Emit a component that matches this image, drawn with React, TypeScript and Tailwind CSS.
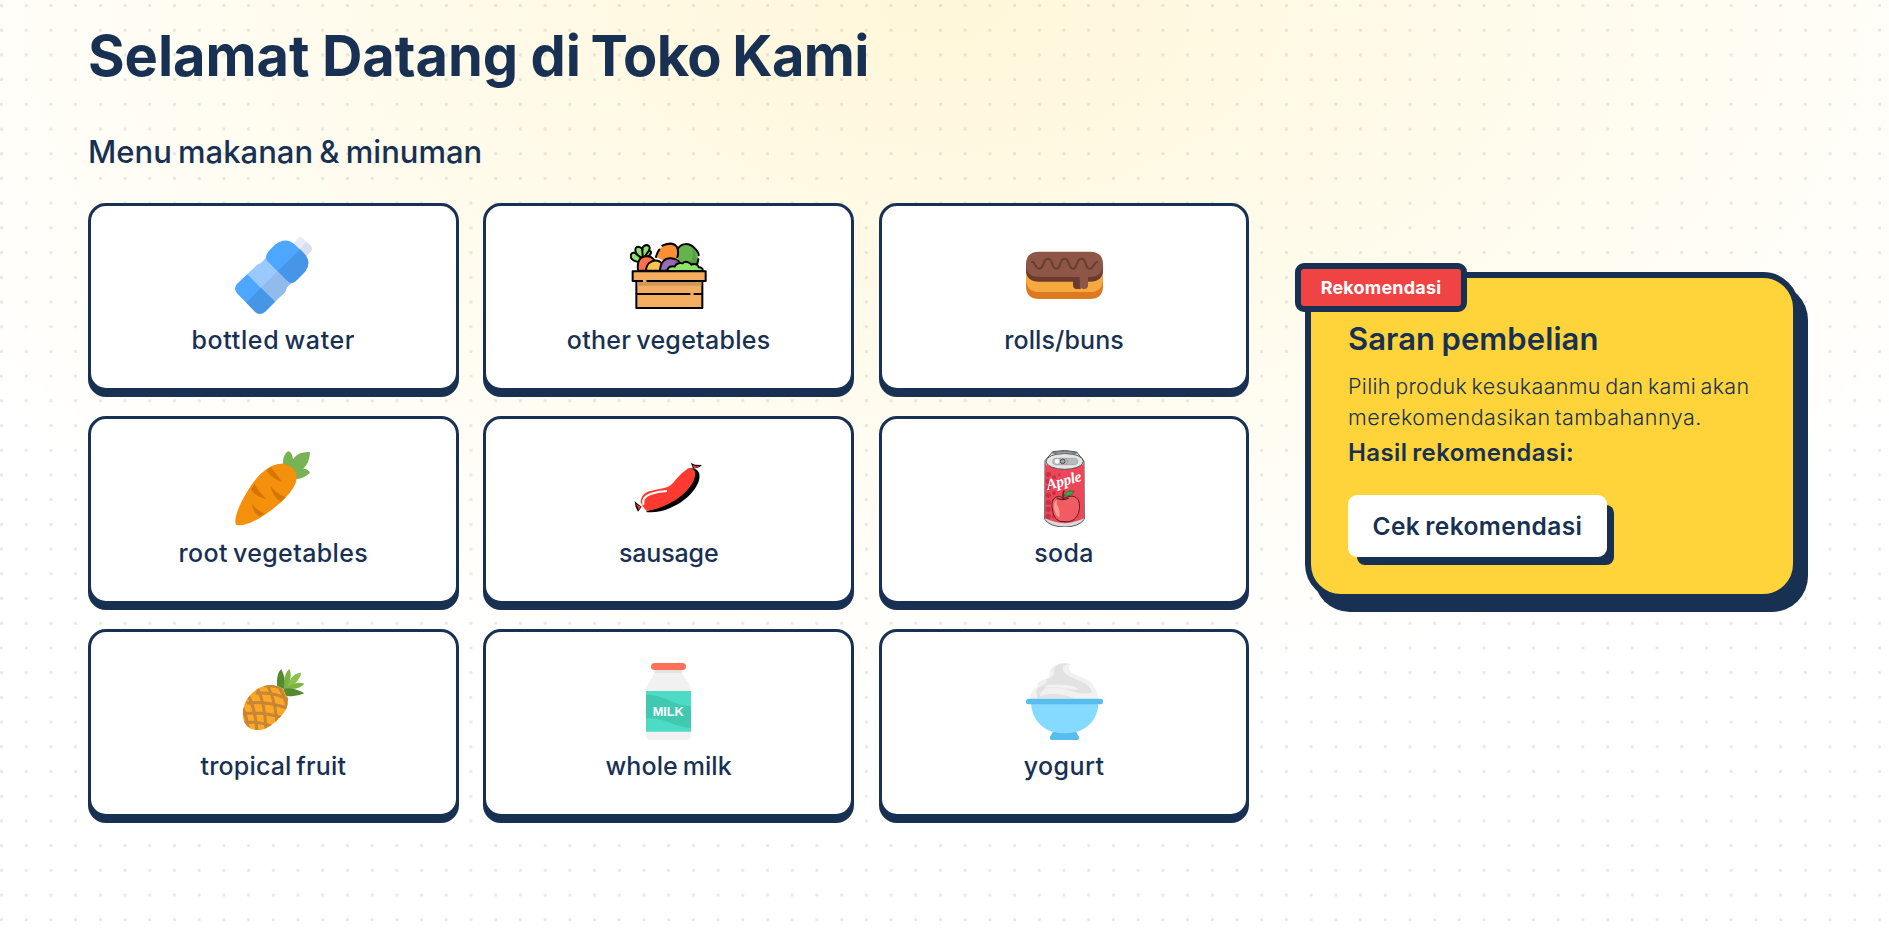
import type { ReactNode } from "react";

function BottleIcon() {
  return (
    <svg viewBox="45 36 231 231" className="size-[77px]">
      <path d="M216 60 L229 44 Q239 30 251 41 L270 60 Q281 71 272 80 L258 95 Z" fill="#e7ebff" />
      <path d="M237 76 L259 50 L270 60 Q281 71 272 80 L258 95 Z" fill="#d9dff1" />
      <path d="M112 119 Q124 117 138 97 L215 174 Q198 186 197 198 Q194 205 186 210 L165 230 L82 147 Z" fill="#9ac9ff" />
      <path d="M176 136 L215 174 Q198 186 197 198 Q194 205 186 210 L165 230 L123 188 Z" fill="#90bbeb" />
      <path d="M82 147 L165 230 L137 259 Q121 273 106 261 L53 207 Q39 193 50 178 Z" fill="#4da6ff" />
      <path d="M123 188 L165 230 L137 259 Q121 273 106 261 L79 233 Z" fill="#4795e6" />
      <path d="M146 79 L164 60 Q196 33 225 59 L251 84 Q277 112 255 140 L233 163 Q216 183 200 166 L142 108 Q133 95 146 79 Z" fill="#4da6ff" />
      <path d="M240 73 L251 84 Q277 112 255 140 L233 163 Q216 183 200 166 L174 138 Z" fill="#4795e6" />
    </svg>
  );
}

function VegetableCrateIcon() {
  return (
    <svg viewBox="46 21 231 231" className="size-[77px]" stroke="#000" strokeWidth="6" strokeLinecap="round" strokeLinejoin="round">
      <path d="M82 95 C68 98 47 92 48 77 C50 65 62 68 66 72 C57 56 65 46 77 52 Q82 54 83 60 C83 47 94 42 103 48 Q107 53 103 62 C115 62 108 82 88 84 Z" fill="#8fe36c" />
      <path d="M66 73 L83 86 M83 60 L84 80 M103 62 L90 80" fill="none" />
      <path d="M188 60 C198 37 224 38 239 54 Q252 70 250 96 L247 109 L190 103 Z" fill="#66b34e" stroke="none" />
      <path d="M231 52 Q249 70 246 106 L226 102 Q240 80 231 52Z" fill="#579d43" stroke="none" />
      <path d="M188 60 C198 37 224 38 239 54 Q252 66 252 76 M251 88 L247 105" fill="none" />
      <path d="M124 81 Q133 50 157 41 Q180 36 188 52 Q194 66 187 86 L156 96 Z" fill="#ff8f35" stroke="none" />
      <path d="M124 81 Q126 70 134 59 M143 47 Q174 33 187 51 Q193 65 188 82" fill="none" />
      <path d="M70 122 C66 91 78 78 98 79 Q112 80 119 91 L107 122 Z" fill="#ff704c" />
      <path d="M94 122 C95 99 112 90 128 92 Q139 94 143 103 L136 122 Z" fill="#ffc44d" />
      <path d="M136 122 C137 96 151 84 168 85 Q187 86 196 99 L188 122 Z" fill="#986bb8" />
      <path d="M180 88 Q190 93 196 102 L180 116 Z" fill="#7d549e" stroke="none" />
      <path d="M158 123 C158 112 170 106 180 110 C185 98 199 98 204 100 C212 91 225 97 230 104 C244 98 252 108 252 112 C264 111 266 121 263 124 Z" fill="#8fe36c" />
      <path d="M65 152 H263 V234 H65 Z" fill="#f4ad61" />
      <path d="M68 156 H260 V167 H68 Z" fill="#cf995c" stroke="none" />
      <path d="M54 124 H273 V153 H54 Z" fill="#f4ad61" />
      <path d="M85 153 H95 M229 192 H237" stroke="#f4ad61" strokeWidth="7" strokeLinecap="butt" />
      <path d="M67 192 H225 M239 192 H262" fill="none" />
    </svg>
  );
}

function BunIcon() {
  return (
    <svg viewBox="48 6 231 231" className="size-[77px]">
      <path d="M48 130 H279 V153 Q279 192 239 192 H88 Q48 192 48 153 Z" fill="#dd7921" />
      <path d="M48 98 H279 V131 Q279 171 239 171 H88 Q48 171 48 131 Z" fill="#f6a941" />
      <path d="M48 86 H279 V104 Q279 140 239 140 H212 V162 H200 Q189 162 189 151 V140 H88 Q48 140 48 104 Z" fill="#6b3c2d" />
      <path d="M88 50 H239 Q279 50 279 88 Q279 126 239 126 H234 V151 Q234 162 223 162 Q209 162 209 149 V126 H88 Q48 126 48 88 Q48 50 88 50 Z" fill="#8d5647" />
      <path d="M66 81 C76 80 74 101 88 101 C103 101 97 71 114 71 C130 71 123 101 139 101 C154 101 147 71 164 71 C181 71 173 101 189 101 C204 101 197 71 214 71 C231 71 223 101 239 101 C253 101 251 81 262 81" fill="none" stroke="#6b3c2d" strokeWidth="6" strokeLinecap="round" />
    </svg>
  );
}

function CarrotIcon() {
  return (
    <svg viewBox="45 31 231 231" className="size-[77px]">
      <path d="M188 73 Q190 43 204 35 Q216 36 219 59 Q234 35 270 37 Q269 70 250 87 Q265 87 270 99 Q253 117 229 118 Z" fill="#77b255" />
      <path d="M48 255 C36 232 78 152 113 112 C145 77 179 63 207 78 C235 92 237 121 216 150 C185 197 84 270 48 255 Z" fill="#f4900c" />
      <path d="M153 83 Q163 96 186 126 Q160 119 140 93 Z M103 132 Q112 150 138 177 Q108 173 92 149 Z M152 140 Q169 162 196 173 L182 186 Q158 172 152 140 Z M96 192 Q111 213 135 223 L119 231 Q99 219 96 192 Z" fill="#d67503" />
    </svg>
  );
}

function SausageIcon() {
  return (
    <svg viewBox="46 31 231 231" className="size-[77px]">
      <path d="M229 70 L241 75 L262 76 L254 83 L235 87 Z M81 201 L66 190 L60 184 L63 202 L70 216 Z" fill="#000" />
      <path d="M233 75 L244 80 L257 78 L248 83 L238 86 Z M79 201 L63 192 L69 202 L72 210 Z" fill="#ff3a30" />
      <path d="M219 87 Q244 82 253 99 C263 132 222 175 189 194 Q137 223 93 217 L126 200 L215 145 Z" fill="#000" />
      <path d="M214 91 C222 84 238 86 241 96 C246 130 208 166 176 185 Q137 208 97 214 Q83 203 78 188 C78 168 92 156 111 153 C143 145 158 149 177 128 Q195 104 214 91 Z" fill="#ff3b31" />
      <path d="M86 196 C83 179 92 168 108 163 Q128 156 157 154" fill="none" stroke="#fff" strokeWidth="6" />
    </svg>
  );
}

function SodaIcon() {
  return (
    <svg viewBox="48 44 231 231" className="size-[77px]">
      <path d="M128 49 Q164 41 200 50 L222 77 L223 252 Q205 275 164 275 Q121 275 104 252 L105 76 Z" fill="#d8d9da" stroke="#58595b" strokeWidth="3" />
      <path d="M105 86 Q163 116 222 86 V249 Q164 278 105 249 Z" fill="#ed4658" />
      <g fill="#ca3046">
        {[117, 138, 159, 180, 201, 222, 243].map((y) => (
          <circle key={y} cx="115" cy={y} r="8" />
        ))}
        {[126, 150, 173, 196, 219, 243].map((y) => (
          <circle key={y} cx="132" cy={y} r="6" />
        ))}
        {[118, 145, 165].map((y) => (
          <circle key={y} cx="148" cy={y} r="4" />
        ))}
      </g>
      <ellipse cx="164" cy="78" rx="56" ry="24" fill="#e4e5e6" stroke="#58595b" strokeWidth="3" />
      <path d="M127 52 Q164 43 201 52 L187 57 Q163 52 142 57 Z" fill="#99a1a5" stroke="#58595b" strokeWidth="2" />
      <rect x="128" y="69" width="75" height="19" rx="9.5" fill="#b7bbbe" stroke="#96999b" strokeWidth="2" />
      <circle cx="141" cy="78" r="7" fill="#fff" />
      <circle cx="158" cy="78" r="7" fill="#a2a5a7" stroke="#4c4d4f" strokeWidth="3" />
      <path d="M166 69 Q180 78 168 87" fill="none" stroke="#96999b" strokeWidth="3" />
      <text x="113" y="164" transform="rotate(-15 113 164)" textLength="108" lengthAdjust="spacing" className="fill-white font-['Liberation_Serif'] text-[46px] font-bold italic">
        Apple
      </text>
      <path d="M160 190 C145 174 122 188 126 216 Q130 263 165 259 C202 263 213 225 207 199 C200 177 177 181 160 190 Z" fill="#f05c61" stroke="#581f27" strokeWidth="3" />
      <path d="M140 193 Q126 203 135 229 Q139 243 148 246 Q151 225 143 212 Q139 202 140 193Z" fill="#ff9c8f" />
      <path d="M140 188 Q158 197 176 188 M160 193 Q157 174 163 165" fill="none" stroke="#581f27" strokeWidth="4" />
      <path d="M162 182 Q169 162 192 168 Q187 183 162 182Z" fill="#35a853" stroke="#275b37" strokeWidth="2" />
    </svg>
  );
}

function PineappleIcon() {
  return (
    <svg viewBox="30 39 231 231" className="size-[77px]">
      <defs>
        <clipPath id="pineapple-body">
          <path d="M60 158 C76 125 112 101 145 106 C174 110 190 129 189 153 C188 172 180 188 162 205 C138 230 115 244 91 240 C64 235 49 212 54 181 Z" />
        </clipPath>
      </defs>
      <g clipPath="url(#pineapple-body)">
        <path d="M48 98 H195 V246 H48 Z" fill="#ffa726" />
        <path d="M91 108 Q119 143 123 242 M121 98 Q151 139 156 225 M151 99 Q181 130 187 180 M66 130 Q91 170 96 246 M48 160 Q67 200 70 246 M92 130 Q150 123 195 153 M65 159 Q130 152 195 178 M52 191 Q110 183 174 203 M48 219 Q95 210 150 232 M116 107 Q157 104 190 126" fill="none" stroke="#c68637" strokeWidth="9" />
      </g>
      <path d="M156 107 Q153 71 169 57 Q181 83 180 101 L178 118 Z" fill="#558b2f" />
      <path d="M178 97 Q177 70 193 57 Q201 73 194 93 Q203 71 228 68 Q224 89 207 101 Q223 95 238 101 Q223 119 191 117 L182 136 Q176 128 178 97 Z" fill="#7cb342" />
      <path d="M194 94 Q204 72 228 68 Q224 91 202 104 L187 111 Z" fill="#8bc34a" />
      <path d="M176 116 Q205 111 238 130 Q211 143 184 137 Z" fill="#558b2f" />
    </svg>
  );
}

function MilkIcon() {
  return (
    <svg viewBox="45 39 231 231" className="size-[77px]">
      <path d="M120 56 H200 V66 Q204 78 219 96 Q228 107 228 122 V256 Q228 270 213 270 H108 Q93 270 93 256 V122 Q93 107 103 96 Q118 76 120 56 Z" fill="#f1f1f1" />
      <path d="M120 59 H200 V69 H120 Z" fill="#e2e2e2" />
      <rect x="108" y="39" width="105" height="21" rx="10.5" fill="#ff7058" />
      <path d="M93 123 H228 V245 H93 Z" fill="#4cdbc4" />
      <path d="M93 134 C150 134 169 165 228 169 V234 C165 227 150 202 93 205 Z" fill="#40c9b0" />
      <text x="113" y="198" textLength="93" lengthAdjust="spacingAndGlyphs" className="fill-white font-['Liberation_Sans'] text-[38px] font-bold">
        MILK
      </text>
    </svg>
  );
}

function YogurtIcon() {
  return (
    <svg viewBox="48 39 231 231" className="size-[77px]">
      <path d="M62 147 Q61 122 81 112 Q78 95 107 87 Q116 84 119 76 C116 50 145 33 185 43 Q171 50 180 62 C193 82 241 79 250 110 Q265 124 264 147 Z" fill="#f1f1f1" />
      <path d="M133 72 C125 48 151 34 179 42 C146 45 160 72 190 81 C234 90 253 119 254 140 L225 145 C206 126 153 127 105 118 C138 113 193 119 206 119 C188 99 145 105 112 104 Q105 106 103 106 Q120 94 108 87 Q126 86 133 72 Z" fill="#e2e2e2" />
      <path d="M107 87 C112 91 110 104 91 109 Q73 119 83 142 Q105 140 109 120 Q137 110 192 119 C156 110 112 114 98 111 Q119 108 107 87 Z M102 115 Q80 127 80 145 L110 145 Q91 136 102 115 Z" fill="#e2e2e2" />
      <path d="M105 116 Q83 131 93 145 H264 Q261 131 246 127 Q224 136 182 122 Q139 108 105 116 Z" fill="#f1f1f1" />
      <path d="M84 141 C115 127 154 130 195 145 H81 Z" fill="#e2e2e2" />
      <path d="M161 46 C146 75 190 82 222 99 Q250 114 250 145 Q262 130 250 110 C241 81 174 88 173 58 Q172 47 185 43 Z" fill="#f1f1f1" />
      <path d="M130 244 H197 L207 260 Q209 270 199 270 H128 Q118 270 120 260 Z" fill="#56bdec" />
      <path d="M63 160 H265 Q263 213 220 237 Q202 249 164 250 Q126 249 108 237 Q66 212 63 160 Z" fill="#85dbff" />
      <rect x="48" y="146" width="231" height="17" rx="8" fill="#56bdec" />
    </svg>
  );
}

type Product = { name: string; icon: ReactNode; spacing: string };

const products: Product[] = [
  { name: "bottled water", icon: <BottleIcon />, spacing: "tracking-[0.62px] [word-spacing:-2px]" },
  { name: "other vegetables", icon: <VegetableCrateIcon />, spacing: "tracking-[0.28px] [word-spacing:-2px]" },
  { name: "rolls/buns", icon: <BunIcon />, spacing: "tracking-[0.12px]" },
  { name: "root vegetables", icon: <CarrotIcon />, spacing: "tracking-[0.37px] [word-spacing:-2px]" },
  { name: "sausage", icon: <SausageIcon />, spacing: "tracking-[-0.15px]" },
  { name: "soda", icon: <SodaIcon />, spacing: "tracking-[0.3px]" },
  { name: "tropical fruit", icon: <PineappleIcon />, spacing: "tracking-[0.15px] [word-spacing:-2px]" },
  { name: "whole milk", icon: <MilkIcon />, spacing: "tracking-[0.1px] [word-spacing:-2px]" },
  { name: "yogurt", icon: <YogurtIcon />, spacing: "tracking-[0.4px]" },
];

function DotGrid() {
  return (
    <svg className="absolute inset-0 size-full" aria-hidden="true">
      <defs>
        <pattern id="dots" width="24.71" height="24.71" patternUnits="userSpaceOnUse" x="0" y="4">
          <rect x="0" y="0" width="3" height="3" rx="0.7" fill="#183153" fillOpacity="0.11" />
        </pattern>
      </defs>
      <rect width="100%" height="100%" fill="url(#dots)" />
    </svg>
  );
}

function ProductCard({ name, icon, spacing }: Product) {
  return (
    <button className="flex h-[188.4px] flex-col items-center rounded-[18px] border-3 border-[#183153] bg-white pt-[31px] shadow-[0_6px_0_#183153]">
      {icon}
      <span className={`mt-[8px] text-[25px] leading-[36px] font-medium whitespace-nowrap ${spacing}`}>{name}</span>
    </button>
  );
}

export default function App() {
  return (
    <div className="relative h-[942px] overflow-hidden bg-white bg-[radial-gradient(ellipse_62%_75%_at_50%_0%,#fff7d9_0%,#ffffff_100%)] font-['Inter',sans-serif] text-[#183153]">
      <DotGrid />
      <main className="relative flex items-start pl-[88px]">
        <section className="w-[1161.4px]">
          <h1 className="mt-[20px] text-[56px] leading-[72px] font-bold tracking-[-0.07px] whitespace-nowrap [word-spacing:-0.6px]">
            Selamat Datang di{" "}
            <span className="-ml-[3px] tracking-[-0.6px] [word-spacing:-1.5px]">Toko Kami</span>
          </h1>
          <h2 className="mt-[40px] text-[31px] leading-[40px] font-medium whitespace-nowrap [word-spacing:-2px]">
            Menu makanan &amp; minuman
          </h2>
          <div className="mt-[31px] grid grid-cols-3 gap-x-[24.67px] gap-y-[24.5px]">
            {products.map((product) => (
              <ProductCard key={product.name} {...product} />
            ))}
          </div>
        </section>
        <aside className="relative mt-[272px] ml-[55.6px] h-[328px] w-[494px] rounded-[36px] border-6 border-[#183153] bg-[#ffd43b] pt-[41px] pl-[37px] shadow-[9px_12px_0_#183153]">
          <span className="absolute -top-[15px] -left-[16px] flex h-[49px] w-[172px] items-center justify-center rounded-[9px] border-6 border-[#183153] bg-[#f04444] text-[18px] font-bold tracking-[0.2px] text-white">
            Rekomendasi
          </span>
          <h3 className="text-[31px] leading-[40px] font-semibold tracking-[0.08px] whitespace-nowrap [word-spacing:-1.5px]">
            Saran pembelian
          </h3>
          <p className="mt-[12px] text-[21.5px] leading-[31px] font-light tracking-[0.32px] whitespace-nowrap [word-spacing:-2px]">
            Pilih produk kesukaanmu dan kami akan
            <br />
            <span className="tracking-[0.46px]">merekomendasikan tambahannya.</span>
          </p>
          <p className="mt-[2px] text-[24px] leading-[36px] font-semibold tracking-[0.38px] whitespace-nowrap [word-spacing:-1.5px]">
            Hasil rekomendasi:
          </p>
          <button className="mt-[24px] h-[62px] w-[259px] rounded-[9px] bg-white pt-px text-[24.5px] font-semibold tracking-[0.4px] whitespace-nowrap shadow-[8px_9px_0_-1px_#183153] [word-spacing:-1.5px]">
            Cek rekomendasi
          </button>
        </aside>
      </main>
    </div>
  );
}
